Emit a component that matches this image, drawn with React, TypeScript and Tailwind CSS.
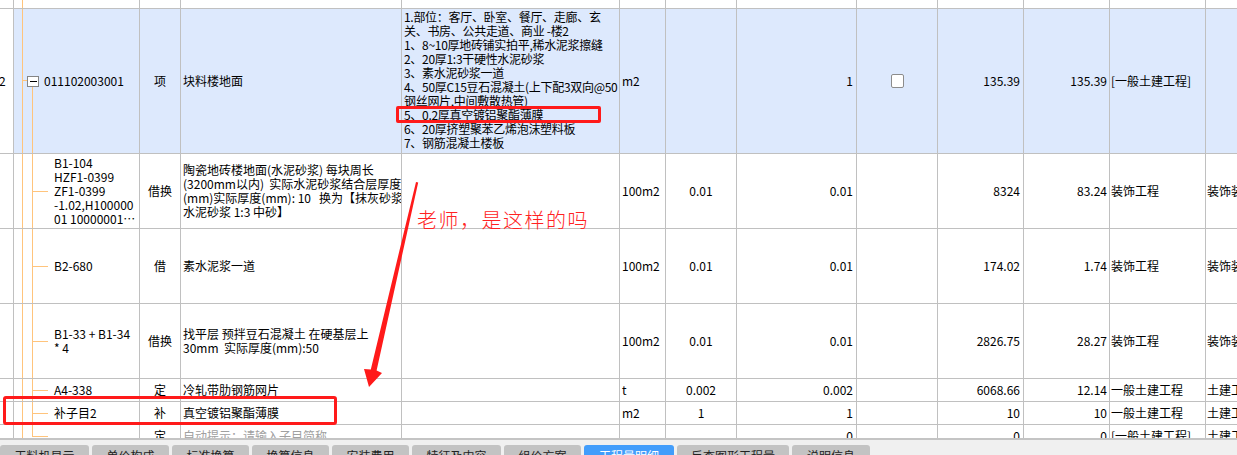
import React from 'react'

type Item = {
  code: string[]
  type: string
  name: string[]
  unit: string
  q1: string
  q2: string
  price: string
  total: string
  p1: string
  p2: string
  hint?: boolean
  last?: boolean
}

const items: Item[] = [
  {
    code: ['B1-104', 'HZF1-0399', 'ZF1-0399', '-1.02,H100000', '01 10000001…'],
    type: '借换',
    name: ['陶瓷地砖楼地面(水泥砂浆) 每块周长', '(3200mm以内)  实际水泥砂浆结合层厚度', '(mm)实际厚度(mm): 10   换为【抹灰砂浆', '水泥砂浆 1:3 中砂】'],
    unit: '100m2', q1: '0.01', q2: '0.01', price: '8324', total: '83.24', p1: '装饰工程', p2: '装饰装修工程',
  },
  {
    code: ['B2-680'], type: '借', name: ['素水泥浆一道'],
    unit: '100m2', q1: '0.01', q2: '0.01', price: '174.02', total: '1.74', p1: '装饰工程', p2: '装饰装修工程',
  },
  {
    code: ['B1-33 + B1-34', '* 4'], type: '借换', name: ['找平层 预拌豆石混凝土 在硬基层上', '30mm  实际厚度(mm):50'],
    unit: '100m2', q1: '0.01', q2: '0.01', price: '2826.75', total: '28.27', p1: '装饰工程', p2: '装饰装修工程',
  },
  {
    code: ['A4-338'], type: '定', name: ['冷轧带肋钢筋网片'],
    unit: 't', q1: '0.002', q2: '0.002', price: '6068.66', total: '12.14', p1: '一般土建工程', p2: '土建工程',
  },
  {
    code: ['补子目2'], type: '补', name: ['真空镀铝聚酯薄膜'],
    unit: 'm2', q1: '1', q2: '1', price: '10', total: '10', p1: '一般土建工程', p2: '土建工程',
  },
  {
    code: [''], type: '定', name: ['自动提示：请输入子目简称'],
    unit: '', q1: '', q2: '0', price: '0', total: '0', p1: '[一般土建工程]', p2: '土建工程', hint: true, last: true,
  },
]

const features = [
  '1.部位：客厅、卧室、餐厅、走廊、玄',
  '关、书房、公共走道、商业 -楼2',
  '1、8~10厚地砖铺实拍平,稀水泥浆擦缝',
  '2、20厚1:3干硬性水泥砂浆',
  '3、素水泥砂浆一道',
  '4、50厚C15豆石混凝土(上下配3双向@50',
  '钢丝网片,中间敷散热管)',
  '5、0.2厚真空镀铝聚酯薄膜',
  '6、20厚挤塑聚苯乙烯泡沫塑料板',
  '7、钢筋混凝土楼板',
]

const tabs = [
  { label: '工料机显示', w: 'w-[89px]' },
  { label: '单价构成', w: 'w-[77px]' },
  { label: '标准换算', w: 'w-[77px]' },
  { label: '换算信息', w: 'w-[77px]' },
  { label: '安装费用', w: 'w-[77px]' },
  { label: '特征及内容', w: 'w-[89px]' },
  { label: '组价方案', w: 'w-[77px]' },
  { label: '工程量明细', w: 'w-[90px]', active: true },
  { label: '反查图形工程量', w: 'w-[112px]' },
  { label: '说明信息', w: 'w-[78px]' },
]

const cell = 'border-r border-b border-[#c0c0c0] overflow-hidden whitespace-pre flex items-center'

const Lines = ({ lines }: { lines: string[] }) => (
  <div className="flex flex-col">
    {lines.map((l, i) => (
      <span key={i}>{l}</span>
    ))}
  </div>
)

const App = () => {
  return (
    <div className="relative w-[1237px] h-[455px] overflow-hidden bg-white text-black text-[12px] leading-[14px] font-['Noto_Sans_CJK_SC','Noto_Sans',sans-serif]">
      <div className="h-[438px] overflow-hidden">
        <div className="grid grid-cols-[14px_126px_41px_221px_218px_46px_71px_120px_81px_86px_86px_96px_80px] grid-rows-[9px_145px_75px_75px_75px_23px_23px_23px]">
          {/* row above, mostly scrolled away */}
          <div className={cell} />
          <div className={`${cell} relative`}>
            <span className="absolute left-[8px] top-0 bottom-0 w-px bg-[#ffc47c]" />
          </div>
          {Array.from({ length: 11 }).map((_, i) => (
            <div key={i} className={cell} />
          ))}

          {/* parent item */}
          <div className={`${cell} -ml-px`}>2</div>
          <div className={`${cell} relative bg-[#dde9fd] pl-[13px]`}>
            <span className="absolute left-[8px] top-0 bottom-0 w-px bg-[#ffc47c]" />
            <span className="absolute left-[8px] top-[71px] w-[5px] h-px bg-[#ffc47c]" />
            <span className="absolute left-[18px] top-[78px] bottom-0 w-px bg-[#ffc47c]" />
            <span className="relative flex items-center justify-center w-[12px] h-[11px] border border-[#858585] bg-white">
              <span className="w-[7px] h-px bg-black" />
            </span>
            <span className="ml-[5px]">011102003001</span>
          </div>
          <div className={`${cell} bg-[#dde9fd] justify-center`}>项</div>
          <div className={`${cell} bg-[#dde9fd] pl-[2px]`}>块料楼地面</div>
          <div className={`${cell} bg-[#dde9fd] pl-[2px] items-start pt-px tracking-[-0.3px]`}>
            <Lines lines={features} />
          </div>
          <div className={`${cell} bg-[#dde9fd] pl-[2px]`}>m2</div>
          <div className={`${cell} bg-[#dde9fd]`} />
          <div className={`${cell} bg-[#dde9fd] justify-end pr-[3px]`}>1</div>
          <div className={`${cell} bg-[#dde9fd] justify-center`}>
            <span className="w-[13px] h-[14px] rounded-[2px] border border-[#8c8c8c] bg-white" />
          </div>
          <div className={`${cell} bg-[#dde9fd] justify-end pr-[3px]`}>135.39</div>
          <div className={`${cell} bg-[#dde9fd] justify-end pr-[2px]`}>135.39</div>
          <div className={`${cell} bg-[#dde9fd] pl-px`}>[一般土建工程]</div>
          <div className={`${cell} bg-[#dde9fd]`} />

          {/* sub items */}
          {items.map((it, r) => (
            <React.Fragment key={r}>
              <div className={cell} />
              <div className={`${cell} relative pl-[40px]`}>
                <span className="absolute left-[8px] top-0 bottom-0 w-px bg-[#ffc47c]" />
                <span className={`absolute left-[18px] top-0 w-px bg-[#ffc47c] ${it.last ? 'h-1/2' : 'bottom-0'}`} />
                <span className="absolute left-[18px] top-1/2 w-[16px] h-px bg-[#ffc47c]" />
                <Lines lines={it.code} />
              </div>
              <div className={`${cell} justify-center`}>{it.type}</div>
              <div className={`${cell} pl-[2px] ${it.hint ? 'text-[#a0a0a0]' : ''}`}>
                <Lines lines={it.name} />
              </div>
              <div className={cell} />
              <div className={`${cell} pl-[2px]`}>{it.unit}</div>
              <div className={`${cell} justify-center`}>{it.q1}</div>
              <div className={`${cell} justify-end pr-[3px]`}>{it.q2}</div>
              <div className={cell} />
              <div className={`${cell} justify-end pr-[3px]`}>{it.price}</div>
              <div className={`${cell} justify-end pr-[2px]`}>{it.total}</div>
              <div className={`${cell} pl-px`}>{it.p1}</div>
              <div className={`${cell} pl-px`}>{it.p2}</div>
            </React.Fragment>
          ))}
        </div>
      </div>

      <div className="h-[2px] bg-[#c4c4c4]" />
      <div className="h-[15px] bg-[#f0f0f0] pt-[5px] flex gap-[3px] overflow-hidden">
        {tabs.map((t) => (
          <div
            key={t.label}
            className={`${t.w} shrink-0 h-[24px] rounded-t-[3px] pt-[4px] text-center whitespace-nowrap ${
              t.active ? 'bg-[#429dfb] text-white' : 'bg-[#c3c3c3] text-[#222]'
            }`}
          >
            {t.label}
          </div>
        ))}
      </div>

      {/* red annotations drawn over the screenshot */}
      <div className="absolute left-[396px] top-[106px] w-[205px] h-[17px] border-[3px] border-[#ff1a1a] rounded-[2px]" />
      <div className="absolute left-[3px] top-[396px] w-[334px] h-[29px] border-[3px] border-[#ff1a1a] rounded-[3px]" />
      <div className="absolute left-[417px] top-[208px] text-[20px] leading-[24px] tracking-[1.5px] font-light text-[#ff2222]">
        老师，是这样的吗
      </div>
      <svg className="absolute left-0 top-0 pointer-events-none" width="1237" height="455" viewBox="0 0 1237 455">
        <polygon
          points="416,182 418.2,182.4 376.6,370.6 382,373 369,387 364,369 370.8,369.4"
          fill="#ff1a1a"
        />
      </svg>
    </div>
  )
}

export default App
